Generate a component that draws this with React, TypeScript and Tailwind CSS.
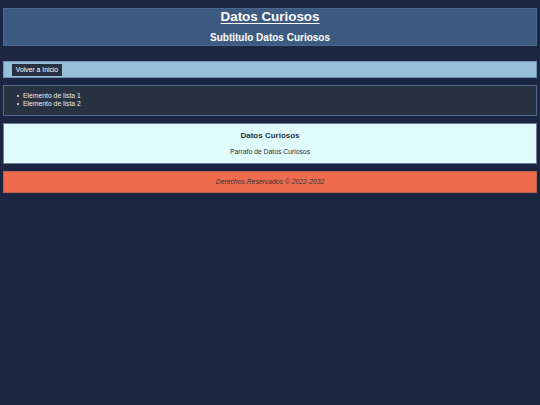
import React from "react";

function Item({ children }: { children: React.ReactNode }) {
  return (
    <li className="flex h-[8px] items-center">
      <span className="ml-[13px] mr-[4px] h-[2px] w-[2px] rounded-full bg-[#e8e8e8]" />
      <span>{children}</span>
    </li>
  );
}

export default function App() {
  return (
    <div className="min-h-screen bg-[#1c2541] px-[3px] pt-[8px] font-['Liberation_Sans',Arial,sans-serif]">
      <header className="box-border flex h-[38px] flex-col items-center border border-[#4a6890] bg-[#3d5a80] text-white">
        <h1 className="mt-[1px] text-[13.4px] font-bold leading-[14px] underline underline-offset-[2px]">
          Datos Curiosos
        </h1>
        <h2 className="mt-[9px] text-[10px] font-bold leading-[10px]">
          Subtitulo Datos Curiosos
        </h2>
      </header>

      <nav className="mt-[15px] box-border flex h-[17px] items-center border border-[#6f97b5] bg-[#98c1d9] pl-[8px]">
        <button className="box-border h-[12px] w-[50px] bg-[#293241] text-[6.8px] leading-[12px] text-white">
          Volver a Inicio
        </button>
      </nav>

      <section className="mt-[7px] box-border h-[31px] border border-[#4f6a8e] bg-[#293241] pt-[6px] text-[#ececec]">
        <ul className="text-[6.8px] leading-[8px]">
          <Item>Elemento de lista 1</Item>
          <Item>Elemento de lista 2</Item>
        </ul>
      </section>

      <section className="mt-[7px] box-border flex h-[41px] flex-col items-center border border-[#6b7f93] bg-[#e0fbfc] pt-[7px] text-[#293241]">
        <h3 className="text-[8px] font-bold leading-[10px]">Datos Curiosos</h3>
        <p className="mt-[6px] text-[6.8px] leading-[10px]">Parrafo de Datos Curiosos</p>
      </section>

      <footer className="mt-[7px] box-border flex h-[22px] items-center justify-center border border-[#b9644f] bg-[#ee6c4d] text-[6.8px] italic text-[#293241]">
        Derechos Reservados © 2022-2032
      </footer>
    </div>
  );
}
